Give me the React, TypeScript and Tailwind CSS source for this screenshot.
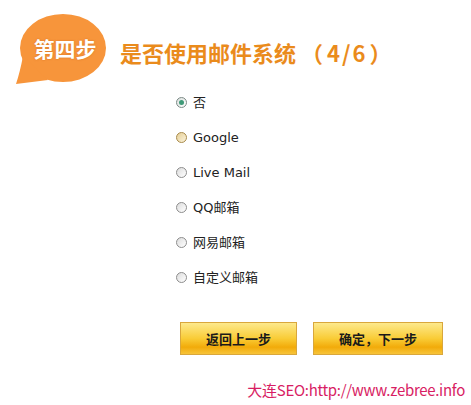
import React from 'react';

const options = ['否', 'Google', 'Live Mail', 'QQ邮箱', '网易邮箱', '自定义邮箱'];

function Radio({ state }: { state: 'checked' | 'hover' | 'off' }) {
  if (state === 'checked') {
    return (
      <span className="flex items-center justify-center w-[11px] h-[11px] rounded-full border border-[#7c8a86] bg-[linear-gradient(135deg,#d9dfdd,#ffffff)]">
        <span className="w-[5px] h-[5px] rounded-full bg-[#3f9a78]" />
      </span>
    );
  }
  if (state === 'hover') {
    return (
      <span className="w-[11px] h-[11px] rounded-full border border-[#a88a4a] bg-[linear-gradient(135deg,#e6cf96,#fbf3dc)]" />
    );
  }
  return (
    <span className="w-[11px] h-[11px] rounded-full border border-[#8d8d8d] bg-[linear-gradient(135deg,#dcdcdc,#ffffff)]" />
  );
}

export default function App() {
  return (
    <div className="w-[471px] h-[405px] bg-white overflow-hidden pt-[12px] font-['Noto_Sans_CJK_SC',sans-serif]">

      {/* HEADER */}
      <div className="flex items-start h-[73px] pl-[14px]">
        <div className="relative w-[96px] h-[74px] shrink-0 flex items-center justify-center">
          <svg className="absolute inset-0" width="96" height="74" viewBox="0 0 96 74">
            <ellipse cx="49" cy="36" rx="43" ry="34" fill="#f7953b" />
            <path d="M9 44 Q6 60 2 72 Q18 70 34 68 Z" fill="#f7953b" />
          </svg>
          <span className="relative ml-[6px] mt-[-1px] text-[21px] leading-none font-bold text-white [text-shadow:0_0_2px_rgba(190,90,10,0.6)]">
            第四步
          </span>
        </div>
        <h1 className="ml-[10px] mt-[27px] text-[22px] leading-[26px] font-bold text-[#ea8b1c] whitespace-nowrap">
          是否使用邮件系统 （<span className="tracking-[2px] ml-[4px] mr-[2px]">4/6</span>）
        </h1>
      </div>

      {/* OPTIONS */}
      <div className="pl-[176px] flex flex-col">
        {options.map((o, i) => (
          <div key={o} className="flex items-center h-[35px] gap-[6px]">
            <Radio state={i === 0 ? 'checked' : i === 1 ? 'hover' : 'off'} />
            <span className="text-[13px] leading-none text-[#222] font-['DejaVu_Sans','Noto_Sans_CJK_SC',sans-serif]">{o}</span>
          </div>
        ))}
      </div>

      {/* BUTTONS */}
      <div className="flex gap-[16px] pl-[180px] mt-[27px]">
        <button className="w-[117px] h-[33px] border border-[#d9a73c] bg-[linear-gradient(to_bottom,#fde98c,#f9cc36_50%,#f2ab0a_78%,#f7c43a)] text-[13px] font-bold text-[#1a1a1a]">
          返回上一步
        </button>
        <button className="w-[130px] h-[33px] border border-[#d9a73c] bg-[linear-gradient(to_bottom,#fde98c,#f9cc36_50%,#f2ab0a_78%,#f7c43a)] text-[13px] font-bold text-[#1a1a1a]">
          确定，下一步
        </button>
      </div>

      {/* FOOTER */}
      <div className="flex justify-end pr-[6px] mt-[25px]">
        <span className="text-[15px] leading-[20px] text-[#d81d63] tracking-[-0.3px]">大连SEO:http://www.zebree.info</span>
      </div>
    </div>
  );
}
